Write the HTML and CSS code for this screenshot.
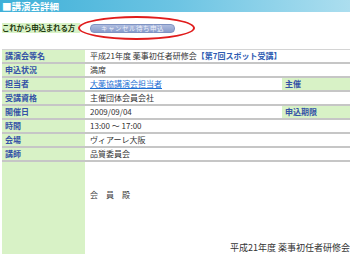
FILE: index.html
```html
<!DOCTYPE html>
<html lang="ja">
<head>
    <meta charset="UTF-8">
    <title>講演会詳細</title>
    <link rel="stylesheet" href="styles.css">
</head>
<body>

    <!-- Page title bar -->
    <div class="title-bar">■講演会詳細</div>

    <!-- Apply row with cancel-wait button -->
    <div class="apply-row">
        <div class="apply-label">これから申込まれる方</div>
        <button class="wait-btn">キャンセル待ち申込</button>
        <div class="mark"></div>
    </div>

    <!-- Detail list -->
    <div class="detail">
        <div class="row">
            <div class="label">講演会等名</div>
            <div class="value">平成21年度 薬事初任者研修会<span class="accent">【第7回スポット受講】</span></div>
        </div>
        <div class="row">
            <div class="label">申込状況</div>
            <div class="value">満席</div>
        </div>
        <div class="row">
            <div class="label">担当者</div>
            <div class="value"><a href="#">大薬協講演会担当者</a></div>
            <div class="label sub">主催</div>
        </div>
        <div class="row">
            <div class="label">受講資格</div>
            <div class="value">主催団体会員会社</div>
        </div>
        <div class="row">
            <div class="label">開催日</div>
            <div class="value">2009/09/04</div>
            <div class="label sub">申込期限</div>
        </div>
        <div class="row">
            <div class="label">時間</div>
            <div class="value">13:00 ～ 17:00</div>
        </div>
        <div class="row">
            <div class="label">会場</div>
            <div class="value">ヴィアーレ大阪</div>
        </div>
        <div class="row">
            <div class="label">講師</div>
            <div class="value">品質委員会</div>
        </div>
        <div class="row note-row">
            <div class="label"></div>
            <div class="value">
                <div class="to">会　員　殿</div>
                <div class="from">平成21年度 薬事初任者研修会</div>
            </div>
        </div>
    </div>

</body>
</html>
```

FILE: styles.css
```css
* {
    margin: 0;
    padding: 0;
    box-sizing: border-box;
}

body {
    font-family: "Noto Sans CJK JP", "Liberation Sans", sans-serif;
    background-color: #fff;
    color: #333;
    font-size: 8px;
    line-height: 12px;
    overflow: hidden;
}

.title-bar {
    height: 12px;
    padding-left: 2px;
    background: linear-gradient(to right, #3fb0d8, #6cc4e3 50%, #acdeef);
    color: #fff;
    font-size: 9.5px;
    font-weight: bold;
    line-height: 13px;
    overflow: hidden;
}

.apply-row {
    position: relative;
    display: flex;
    align-items: center;
    gap: 10px;
    margin: 11px 0 0 2px;
    height: 10px;
}

.apply-label {
    width: 78px;
    height: 10px;
    background-color: #d8f2c6;
    color: #1f3a10;
    font-size: 7.5px;
    font-weight: bold;
    line-height: 10px;
    letter-spacing: -0.2px;
    white-space: nowrap;
}

.wait-btn {
    width: 85px;
    height: 9px;
    border: 1px solid #7f93c2;
    border-radius: 4px;
    background: linear-gradient(#aebcdf, #8a9dcb);
    color: #eef2fb;
    font-family: inherit;
    font-size: 6.5px;
    line-height: 7px;
    letter-spacing: 0.5px;
}

.mark {
    position: absolute;
    left: 76px;
    top: -7px;
    width: 117px;
    height: 24px;
    border: 2px solid #e01c1c;
    border-radius: 50%;
}

.detail {
    margin: 16px 0 0 2px;
    border-top: 1px solid #d4d4d4;
}

.row {
    display: grid;
    grid-template-columns: 83px 1fr 68px;
    height: 14px;
    border-bottom: 2px solid #c6c6c6;
}

.label {
    padding-left: 3px;
    background-color: #d8f2c6;
    color: #3452a6;
    font-weight: bold;
    white-space: nowrap;
}

.value {
    grid-column: 2 / 4;
    padding-left: 5px;
    color: #333;
    white-space: nowrap;
    overflow: hidden;
}

.row .sub {
    grid-column: 3;
}

.row:has(.sub) .value {
    grid-column: 2;
}

.accent {
    color: #2f5db3;
    font-weight: bold;
}

.value a {
    color: #1d6fd4;
}

.note-row {
    height: 94px;
    border-bottom: none;
}

.to {
    margin-top: 27px;
    color: #444;
}

.from {
    margin-top: 41px;
    text-align: right;
    font-size: 9px;
    color: #333;
}
```
